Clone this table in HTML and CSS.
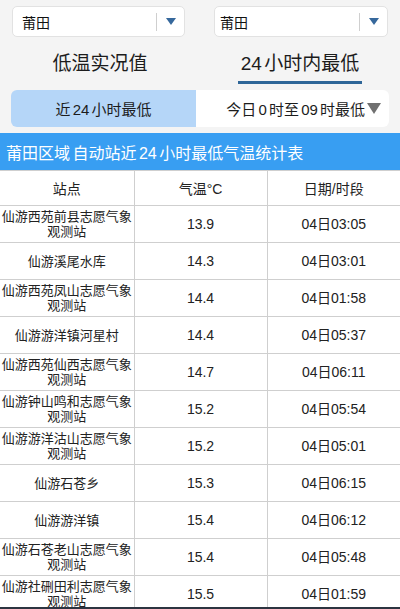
FILE: index.html
```html
<!DOCTYPE html>
<html lang="zh">
<head>
<meta charset="utf-8">
<link rel="stylesheet" href="styles.css">
</head>
<body>
<div class="page">
  <div class="selects">
    <div class="select"><span class="sel-text">莆田</span><span class="sel-div"></span><span class="sel-arrow"></span></div>
    <div class="select"><span class="sel-text">莆田</span><span class="sel-div"></span><span class="sel-arrow"></span></div>
  </div>
  <div class="tabs">
    <div class="tab">低温实况值</div>
    <div class="tab active"><span class="tab-label">24 小时内最低</span></div>
  </div>
  <div class="subtabs">
    <div class="subtab on">近 24 小时最低</div>
    <div class="subtab">今日 0 时至 09 时最低<span class="gray-arrow"></span></div>
  </div>
  <div class="title-bar">莆田区域 自动站近 24 小时最低气温统计表</div>
  <table class="data">
    <thead>
      <tr><th>站点</th><th>气温°C</th><th>日期/时段</th></tr>
    </thead>
    <tbody>
      <tr><td>仙游西苑前县志愿气象观测站</td><td>13.9</td><td>04日03:05</td></tr>
      <tr><td>仙游溪尾水库</td><td>14.3</td><td>04日03:01</td></tr>
      <tr><td>仙游西苑凤山志愿气象观测站</td><td>14.4</td><td>04日01:58</td></tr>
      <tr><td>仙游游洋镇河星村</td><td>14.4</td><td>04日05:37</td></tr>
      <tr><td>仙游西苑仙西志愿气象观测站</td><td>14.7</td><td>04日06:11</td></tr>
      <tr><td>仙游钟山鸣和志愿气象观测站</td><td>15.2</td><td>04日05:54</td></tr>
      <tr><td>仙游游洋沽山志愿气象观测站</td><td>15.2</td><td>04日05:01</td></tr>
      <tr><td>仙游石苍乡</td><td>15.3</td><td>04日06:15</td></tr>
      <tr><td>仙游游洋镇</td><td>15.4</td><td>04日06:12</td></tr>
      <tr><td>仙游石苍老山志愿气象观测站</td><td>15.4</td><td>04日05:48</td></tr>
      <tr><td>仙游社硎田利志愿气象观测站</td><td>15.5</td><td>04日01:59</td></tr>
    </tbody>
  </table>
</div>
<div class="bottom-edge"></div>
</body>
</html>
```
FILE: styles.css
```css
* { box-sizing: border-box; }
html, body {
  margin: 0;
  padding: 0;
  height: 609px;
  overflow: hidden;
  background: #f4f4f4;
  font-family: "Liberation Sans", "Noto Sans CJK SC", sans-serif;
  color: #222;
}
.page { width: 400px; }
.selects {
  display: flex;
  justify-content: space-between;
  padding: 6px 12px 0 12px;
}
.select {
  width: 173px;
  height: 31px;
  background: #fff;
  border: 1px solid #e2e2e2;
  border-radius: 5px;
  display: flex;
  align-items: center;
  padding-left: 9px;
}
.select:last-child { width: 174px; padding-left: 5px; }
.sel-text { font-size: 14px; flex: 1; color: #111; }
.sel-div {
  width: 1px;
  height: 18px;
  background: #cfcfcf;
  margin-right: 9px;
}
.sel-arrow {
  width: 0; height: 0;
  border-left: 5px solid transparent;
  border-right: 5px solid transparent;
  border-top: 7px solid #36689c;
  margin-right: 8px;
}
.tabs {
  display: flex;
  height: 53px;
}
.tab {
  flex: 1;
  display: flex;
  justify-content: center;
  align-items: flex-start;
  padding-top: 15px;
  font-size: 19px;
  color: #1c1c1c;
  line-height: 24px;
}
.tab-label {
  border-bottom: 3px solid #2e6698;
  padding: 0 3px 5px;
  word-spacing: -3px;
}
.subtabs {
  display: flex;
  margin: 0 11px;
  height: 37px;
}
.subtab {
  flex: 1;
  background: #fff;
  border-radius: 0 6px 6px 0;
  display: flex;
  align-items: center;
  justify-content: flex-end;
  padding-right: 8px;
  font-size: 15px;
  color: #1c1c1c;
  word-spacing: -2px;
  white-space: pre;
}
.subtab.on {
  background: #b5d6f8;
  border-radius: 6px 0 0 6px;
  justify-content: center;
  padding-right: 0;
}
.gray-arrow {
  width: 0; height: 0;
  border-left: 7px solid transparent;
  border-right: 7px solid transparent;
  border-top: 11px solid #707070;
  margin-left: 2px;
}
.title-bar {
  margin-top: 6px;
  height: 37px;
  background: #389ef2;
  color: #fff;
  font-size: 16px;
  display: flex;
  align-items: center;
  padding-left: 6px;
  word-spacing: -2px;
  white-space: pre;
}
.data {
  width: 400px;
  border-collapse: collapse;
  background: #fff;
  table-layout: fixed;
}
.data th, .data td {
  border: 1px solid #cfcfcf;
  text-align: center;
  vertical-align: middle;
  padding: 0;
  color: #222;
}
.data tr > :first-child { border-left: none; width: 134px; }
.data tr > :last-child { border-right: none; }
.data tr > :nth-child(2) { width: 133px; }
.data th {
  height: 35px;
  font-size: 14px;
  font-weight: normal;
}
.data td {
  height: 37px;
  font-size: 14px;
  line-height: 15px;
}
.data td:first-child {
  font-size: 13px;
  padding: 0 1px;
}
.bottom-edge {
  position: fixed;
  left: 0;
  right: 0;
  bottom: 0;
  height: 2px;
  background: #2c3440;
}
```
